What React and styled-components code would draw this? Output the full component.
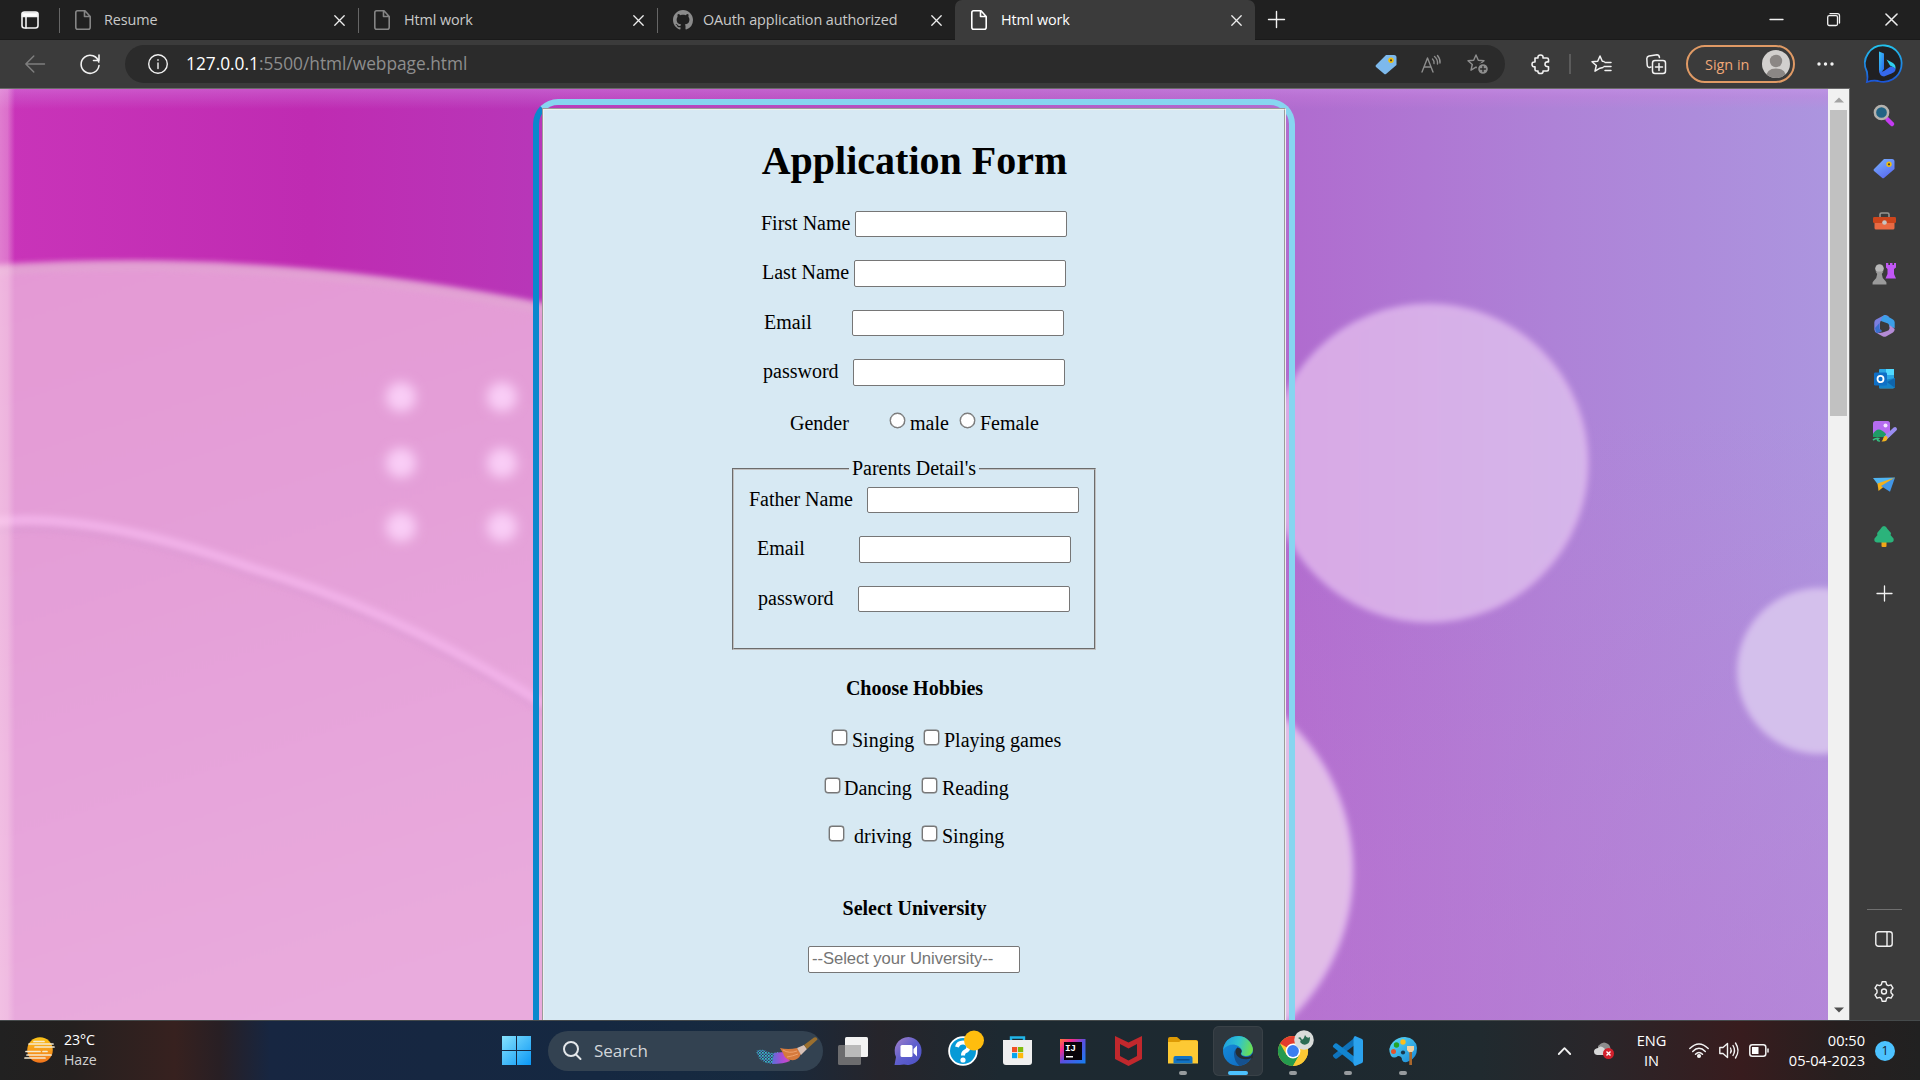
import React from "react";
import styled, { createGlobalStyle, css } from "styled-components";

const UI = `"Segoe UI", "Open Sans", "Noto Sans", sans-serif`;
const SERIF = `"Times New Roman", "Liberation Serif", serif`;

const Global = createGlobalStyle`
  *, *::before, *::after { box-sizing: border-box; }
  html, body { margin: 0; padding: 0; overflow: hidden; background: #202020; }
  svg { display: block; flex: none; overflow: visible; }
`;

const Desktop = styled.div`
  width: 1920px;
  height: 1080px;
  display: flex;
  flex-direction: column;
  font-family: ${UI};
  overflow: hidden;
`;

/* ---------- tab strip ---------- */

const TabStrip = styled.header`
  height: 40px;
  display: flex;
  align-items: stretch;
  background: #202020;
  border-bottom: 1px solid #1a1a1a;
  color: #c9c9c9;
`;

const WorkspaceButton = styled.div`
  width: 59px;
  display: flex;
  align-items: center;
  justify-content: center;
`;

const Tab = styled.div`
  width: ${(p) => p.$width}px;
  height: 40px;
  display: flex;
  align-items: center;
  padding: 0 13px 0 16px;
  font-size: 14.4px;
  letter-spacing: ${(p) => p.$track || 0}px;
  white-space: nowrap;
  ${(p) =>
    p.$active
      ? css`
          background: #3b3b3b;
          color: #fff;
          border-radius: 7px 7px 0 0;
        `
      : css`
          &::before {
            content: "";
            width: 1px;
            height: 25px;
            margin-left: -16px;
            margin-right: 15px;
            background: #666;
          }
        `}
`;

const TabTitle = styled.span`
  margin-left: ${(p) => p.$gap || 14}px;
  flex: 1;
  line-height: 20px;
  padding-bottom: 1px;
`;

const NewTab = styled.div`
  width: 43px;
  display: flex;
  align-items: center;
  justify-content: center;
`;

const WindowButtons = styled.div`
  margin-left: auto;
  display: flex;
  align-items: center;
`;

const WindowButton = styled.div`
  width: 57px;
  display: flex;
  justify-content: center;
  &:not(:last-child) {
    padding-right: 2px;
  }
`;

/* ---------- toolbar ---------- */

const Toolbar = styled.nav`
  height: 48px;
  display: flex;
  align-items: center;
  background: #3b3b3b;
`;

const ToolSlot = styled.div`
  width: ${(p) => p.$w}px;
  display: flex;
  align-items: center;
  justify-content: center;
`;

const AddressBar = styled.div`
  width: 1380px;
  height: 38px;
  display: flex;
  align-items: center;
  border-radius: 19px;
  background: #2b2b2b;
  padding-left: 11px;
`;

const Url = styled.span`
  margin-left: 6px;
  flex: 1;
  font-size: 17.3px;
  line-height: 24px;
  color: #8e8e8e;
  b {
    font-weight: 400;
    color: #fff;
  }
`;

const Divider = styled.i`
  width: 2px;
  height: 20px;
  margin: 0 0 0 -6px;
  background: #5b5b5b;
`;

const SignIn = styled.div`
  width: 109px;
  height: 38px;
  display: flex;
  align-items: center;
  justify-content: space-between;
  border: 2px solid #e09a65;
  border-radius: 19px;
  padding: 0 3px 0 17px;
  color: #f0a878;
  font-size: 14.4px;
`;

/* ---------- middle ---------- */

const Middle = styled.div`
  height: 932px;
  display: flex;
`;

const Viewport = styled.main`
  width: 1849px;
  height: 932px;
  display: flex;
  border-top: 1px solid #6a6a6a;
  overflow: hidden;
`;

const Page = styled.div`
  position: relative;
  width: 1828px;
  height: 931px;
  overflow: hidden;
`;

const Backdrop = styled.svg`
  position: absolute;
  inset: 0;
`;

const Scrollbar = styled.div`
  width: 21px;
  display: flex;
  flex-direction: column;
  align-items: center;
  background: #f1f1f1;
`;

const ScrollArrow = styled.div`
  height: 21px;
  display: flex;
  align-items: center;
`;

const ScrollThumb = styled.div`
  width: 17px;
  height: 306px;
  margin-bottom: auto;
  background: #c1c1c1;
`;

const SideBar = styled.aside`
  width: 71px;
  display: flex;
  flex-direction: column;
  align-items: center;
  background: #3b3b3b;
  border-left: 1px solid #6a6a6a;
  padding: 1px 2px 3px 0;
`;

const SideSlot = styled.div`
  height: ${(p) => p.$h || 52.7}px;
  display: flex;
  align-items: center;
`;

const SideRule = styled.i`
  width: 35px;
  height: 1px;
  margin-top: auto;
  margin-bottom: 3px;
  background: #707070;
`;

/* ---------- form ---------- */

const Frame = styled.section`
  position: relative;
  width: 762px;
  height: 1400px;
  margin: 10px 0 0 533px;
  padding: 3px;
  border: 6px solid #87d5f0;
  border-left-color: #0a88cd;
  border-radius: 25px;
`;

const Sheet = styled.form`
  height: 100%;
  border: 2px groove #efefef;
  background: #d7e9f3;
  font-family: ${SERIF};
  font-size: 20px;
  line-height: 23px;
  color: #000;
`;

const Title = styled.h1`
  margin: 28px 0 0;
  padding-left: 1px;
  text-align: center;
  font-size: 40px;
  line-height: 46px;
`;

const Row = styled.div`
  display: flex;
  align-items: flex-start;
  height: ${(p) => p.$h || 26}px;
  margin-top: ${(p) => p.$top}px;
  padding-left: ${(p) => p.$left}px;
  white-space: pre;
`;

const Label = styled.label`
  width: ${(p) => p.$w}px;
  padding-top: 1px;
`;

const TextInput = styled.input`
  width: 212px;
  height: 100%;
  margin: 0;
  padding: 0 3px 1px;
  border: 1px solid #767676;
  border-radius: 2px;
  background: #fff;
  font: 16.67px Arial, "Liberation Sans", sans-serif;
  letter-spacing: -0.08px;
  outline: none;
  &::placeholder {
    color: #757575;
    opacity: 1;
  }
`;

const Tick = styled.input`
  appearance: none;
  width: 15px;
  height: 15px;
  margin: 2px ${(p) => p.$gap || 5}px 0 0;
  border: 1px solid #767676;
  border-radius: ${(p) => (p.type === "radio" ? "50%" : "3px")};
  background: #fff;
  box-shadow: 0 0 0 0.4px #767676;
`;

const Fieldset = styled.fieldset`
  width: 364px;
  height: 193px;
  margin: 23px 0 0 188px;
  padding: 0;
  border: 2px groove rgb(192, 192, 192);
`;

const Legend = styled.legend`
  width: 130px;
  height: 23px;
  margin: 0 auto;
  padding: 0;
  text-align: center;
`;

const Heading = styled.h4`
  margin: ${(p) => p.$top}px 0 0;
  padding-left: 1px;
  font-size: 20px;
  line-height: 23px;
  text-align: center;
`;

/* ---------- taskbar ---------- */

const TaskBar = styled.footer`
  height: 60px;
  display: flex;
  align-items: center;
  border-top: 1px solid #454a4b;
  color: #fff;
  background: linear-gradient(
    90deg,
    #212121 0,
    #24201f 70px,
    #37211f 175px,
    #281f24 220px,
    #172641 270px,
    #152841 600px,
    #172a3f 760px,
    #26252b 880px,
    #1d2931 1000px,
    #1d2930 1300px,
    #202a2f 1480px,
    #29262a 1590px,
    #381c1e 1740px,
    #261f1f 1840px,
    #212121 1920px
  );
`;

const Weather = styled.div`
  width: 492px;
  padding: 0 0 2px 25px;
  display: flex;
  align-items: center;
  gap: 9px;
  font-size: 14.2px;
  line-height: 20px;
  letter-spacing: -0.1px;
  div div + div {
    color: #d0d0d0;
  }
`;

const StartSlot = styled.div`
  width: 56px;
  padding-left: 10px;
`;

const SearchBox = styled.div`
  width: 275px;
  height: 40px;
  display: flex;
  align-items: center;
  border-radius: 20px;
  background: #334251;
  padding: 0 5px 0 15px;
  font-size: 17px;
  color: #d2d6da;
  span {
    flex: 1;
    margin-left: 12px;
  }
`;

const AppSlot = styled.div`
  position: relative;
  width: 50px;
  height: 50px;
  margin: 0 2.5px;
  display: flex;
  align-items: center;
  justify-content: center;
  border-radius: 6px;
  ${(p) => p.$active && "background:#2e373e; box-shadow: inset 0 0 0 1px #394147;"}
`;

const Running = styled.i`
  position: absolute;
  bottom: 1px;
  left: 50%;
  width: ${(p) => (p.$active ? 20 : 8)}px;
  height: 4px;
  border-radius: 2px;
  transform: translateX(-50%);
  background: ${(p) => (p.$active ? "#4cc2ff" : "#979b9e")};
`;

const Tray = styled.div`
  margin-left: auto;
  display: flex;
  align-items: center;
  padding-right: 25px;
  font-size: 14.6px;
  line-height: 20px;
`;

const TraySlot = styled.div`
  width: ${(p) => p.$w}px;
  display: flex;
  justify-content: center;
  text-align: center;
`;

const Language = styled.div`
  width: 55px;
  margin-right: 1px;
  padding-bottom: 2px;
  text-align: center;
`;

const Clock = styled.div`
  width: 87px;
  text-align: right;
  margin-right: 10px;
  padding-bottom: 2px;
  white-space: nowrap;
`;

const Notice = styled.div`
  width: 20px;
  height: 20px;
  border-radius: 50%;
  background: #4cc2ff;
  color: #15212b;
  font-size: 12.5px;
  line-height: 19px;
  text-align: center;
`;

/* ---------- icons ---------- */

const Line = ({ w = 20, h = w, color = "#f2f2f2", sw = 1.4, vb, children, ...rest }) => (
  <svg width={w} height={h} viewBox={vb || `0 0 ${w} ${h}`} fill="none" stroke={color} strokeWidth={sw} strokeLinecap="round" strokeLinejoin="round" {...rest}>
    {children}
  </svg>
);

const DocIcon = ({ color }) => (
  <Line w={16} h={20} color={color} sw={1.6}>
    <path d="M10 .8H2.6Q.8.8.8 2.8V17.2Q.8 19.2 2.6 19.2H13.4Q15.2 19.2 15.2 17.2V6.5ZM9.5 1V6.5H15" />
  </Line>
);

const CloseIcon = ({ s = 11, color = "#ededed" }) => (
  <Line w={s} color={color} vb="0 0 11 11" sw={1.3}>
    <path d="M.8.8 10.2 10.2M10.2.8.8 10.2" />
  </Line>
);

const GithubIcon = () => (
  <svg width="20" height="20" viewBox="0 0 16 16" fill="#8b8b8b">
    <path d="M8 0C3.58 0 0 3.58 0 8c0 3.54 2.29 6.53 5.47 7.59.4.07.55-.17.55-.38 0-.19-.01-.82-.01-1.49-2.01.37-2.53-.49-2.69-.94-.09-.23-.48-.94-.82-1.13-.28-.15-.68-.52-.01-.53.63-.01 1.08.58 1.23.82.72 1.21 1.87.87 2.33.66.07-.52.28-.87.51-1.07-1.78-.2-3.64-.89-3.64-3.95 0-.87.31-1.59.82-2.15-.08-.2-.36-1.02.08-2.12 0 0 .67-.21 2.2.82.64-.18 1.32-.27 2-.27s1.36.09 2 .27c1.53-1.04 2.2-.82 2.2-.82.44 1.1.16 1.92.08 2.12.51.56.82 1.27.82 2.15 0 3.07-1.87 3.75-3.65 3.95.29.25.54.73.54 1.48 0 1.07-.01 1.93-.01 2.2 0 .21.15.46.55.38A8.01 8.01 0 0 0 16 8c0-4.42-3.58-8-8-8Z" />
  </svg>
);

const BingIcon = () => (
  <svg width="40" height="40" viewBox="0 0 40 40">
    <defs>
      <linearGradient id="bgA" x1="0" y1="0" x2="0" y2="1">
        <stop offset="0" stopColor="#22c3ee" />
        <stop offset="1" stopColor="#1b55d8" />
      </linearGradient>
      <linearGradient id="bgB" x1="0" y1="0" x2="1" y2="1">
        <stop offset="0" stopColor="#37c9f2" />
        <stop offset="1" stopColor="#2a62f0" />
      </linearGradient>
    </defs>
    <path d="M20 1.5A18.2 18.2 0 1 1 13 37Q8 36 2 38Q3 34 2 28A18.2 18.2 0 0 1 20 1.5Z" fill="#202023" stroke="url(#bgA)" strokeWidth="1.8" />
    <path d="M14 7.500 19 9.500V25L15.500 29.500Q14 28 14 26Z" fill="url(#bgB)" />
    <path d="M21.500 15.500 28 19Q31 21 30.500 25Q27 22 25 21.500Z" fill="#2fd0ee" />
    <path d="M14 26Q15 29 19 27L25.500 22.500Q31 23 30.500 26Q30 28 26.500 29.500L19 32.500Q14.500 32.500 14 26Z" fill="#3568ee" />
  </svg>
);

const SearchTool = () => (
  <svg width="22" height="22" viewBox="0 0 22 22">
    <path d="M14.500 15.500 19 20" stroke="#c43bf2" strokeWidth="4.500" strokeLinecap="round" />
    <circle cx="8.500" cy="8.500" r="6.600" fill="#216384" stroke="#b4b2ae" strokeWidth="2.500" />
  </svg>
);

const TagIcon = ({ toolbar }) => (
  <svg width="22" height="21" viewBox="0 0 22 21">
    <defs>
      <linearGradient id="tagG" x1="0" y1="0" x2=".6" y2="1">
        <stop offset="0" stopColor="#79b4ff" />
        <stop offset="1" stopColor="#5b6df0" />
      </linearGradient>
    </defs>
    <path d="M11 1H19Q21.500 1 21.500 3.500V11L11 20Q10 20.800 9 19.800L1 13Q0 12 1 11Z" fill={toolbar ? "#7db9ec" : "url(#tagG)"} />
    <circle cx="16" cy="6.300" r="2.700" fill="#efbd0e" />
    <circle cx="16" cy="6.300" r="1.100" fill="#473b20" />
  </svg>
);

const ToolboxIcon = () => (
  <svg width="23" height="18" viewBox="0 0 23 18">
    <path d="M7 5V2.500Q7 1 8.500 1H14.500Q16 1 16 2.500V5" fill="none" stroke="#979591" strokeWidth="1.600" />
    <path d="M1.500 9H21.500V16Q21.500 17.500 20 17.500H3Q1.500 17.500 1.500 16Z" fill="#e96a43" />
    <rect x="0" y="5" width="23" height="6" rx="1.200" fill="#cc451c" />
    <circle cx="11.500" cy="10.500" r="2.300" fill="#c7c5c3" />
  </svg>
);

const ChessIcon = () => (
  <svg width="24" height="23" viewBox="0 0 24 23">
    <path d="M14 1H16.300V3H18V1H20.500V3H22V1H24V5.500L22 7V12L24 16.500H13.500L15.500 12V7L14 5.500Z" fill="#c257f6" />
    <circle cx="7.500" cy="6.500" r="4.300" fill="#b8b8b8" />
    <path d="M3.500 9.500H11.500L9.800 12Q10 16 13 18.500Q15 20 14.500 22.500H.5Q0 20 2 18.500Q5 16 5.200 12Z" fill="#9a9a9a" />
  </svg>
);

const M365Icon = () => (
  <svg width="21" height="22" viewBox="0 0 21 22">
    <path d="M10.500 0 2 4.500Q.3 5.500.3 7.500V14.500Q.5 17.500 3 18.300L8 16Q5.500 15 6 12V8Q6 6 8 5L15 1.500Q12.500-.5 10.500 0Z" fill="#7c7fe0" />
    <path d="M10.500 0Q7 2 7 6L14 8.500Q15.500 9.500 15.500 12L20.700 13V7.500Q20.700 5.500 19 4.500L13 1Q11.500 0 10.500 0Z" fill="#3c9fe8" />
    <path d="M15.500 10V13.500Q15 15.500 13 16L8.500 17.500 3 18.300 9 21.500Q10.500 22 12 21.500L19 17.500Q20.700 16.300 20.700 14Z" fill="#b48bd6" />
    <path d="M2 17.500Q5 18.500 8 16L5.500 14V8L1 13Z" fill="#3a6fce" />
  </svg>
);

const OutlookIcon = () => (
  <svg width="21" height="20" viewBox="0 0 21 20">
    <rect x="5" y="0" width="15" height="19.500" rx="1" fill="#2aa6e4" />
    <path d="M12 0H20V6H12Z" fill="#50d9ff" />
    <path d="M5 12 21 9V19H5Z" fill="#1583c9" />
    <path d="M21 9V19L13 13Z" fill="#0f65ac" />
    <rect x="0" y="3.500" width="13" height="13" rx="1.200" fill="#0f6fc6" />
    <ellipse cx="6.500" cy="10" rx="3" ry="3.200" fill="none" stroke="#fff" strokeWidth="1.800" />
  </svg>
);

const DesignerIcon = () => (
  <svg width="24" height="23" viewBox="0 0 24 23">
    <rect x="1" y="1" width="17" height="16" rx="2.500" fill="#b66cf0" />
    <path d="M1 14Q6 5 14 14V17H1Z" fill="#1f9b66" />
    <circle cx="13.500" cy="5.500" r="2" fill="#f4e6ff" />
    <path d="M23 9 14 17.500" stroke="#9a8df2" strokeWidth="4" strokeLinecap="round" />
    <path d="M15.500 17Q16 22 9.500 21.500Q11 20 11.500 17.500Q13.500 15 15.500 17Z" fill="#f5b51f" />
    <path d="M1 20Q4 18 6.500 18.500Q4 21 8 21" fill="none" stroke="#35c081" strokeWidth="1.700" />
  </svg>
);

const DropIcon = () => (
  <svg width="22" height="15" viewBox="0 0 22 15">
    <path d="M0 1 22 .5 6 9Z" fill="#50b5f2" />
    <path d="M22 .5 4.500 6.500 5.500 14Z" fill="#f3b11c" />
    <path d="M22 .5 8 9 17 14.800Z" fill="#4297e8" />
  </svg>
);

const TreeIcon = () => (
  <svg width="22" height="21" viewBox="0 0 22 21">
    <rect x="8.500" y="14" width="5" height="7" rx="1" fill="#f0a618" />
    <path d="M11 0Q13 0 14.500 3L18 7Q18 8.500 17.500 9L20.500 12.500Q21.500 16 18 16.500H4Q.5 16 1.500 12.500L4.500 9Q3.500 8 4.500 6.500L7.500 3Q9 0 11 0Z" fill="#2bb37b" />
  </svg>
);

const GearIcon = () => (
  <Line w={20} h={21} vb="0 0 20 21" sw={1.400}>
    <path d="M8.100.8H11.900L12.600 3.600 14.300 4.600 17 3.800 19 7.100 17 9.200V11.800L19 13.900 17 17.200 14.300 16.400 12.600 17.400 11.900 20.200H8.100L7.400 17.400 5.700 16.400 3 17.200 1 13.900 3 11.800V9.200L1 7.100 3 3.800 5.700 4.600 7.400 3.600Z" />
    <circle cx="10" cy="10.500" r="2.500" />
  </Line>
);

const StarPath = "M9 1 11.300 6.300 17 6.800 12.700 10.500 14 16.200 9 13.200 4 16.200 5.300 10.500 1 6.800 6.700 6.300Z";

/* taskbar artwork */

const HazeIcon = () => (
  <svg width="30" height="26" viewBox="0 0 30 26">
    <defs>
      <linearGradient id="sun" x1="0" y1="0" x2="0" y2="1">
        <stop offset="0" stopColor="#fbc418" />
        <stop offset="1" stopColor="#f1741c" />
      </linearGradient>
    </defs>
    <circle cx="15" cy="13" r="12.800" fill="url(#sun)" />
    <g stroke="#f5ead0" strokeWidth="1.700" strokeLinecap="round">
      <path d="M9 4.500H19M4 7H28M10 10H29M1 14.500H15M18 14.500H22M2 18H26M0 21H20" />
    </g>
  </svg>
);

const StartIcon = () => (
  <svg width="29" height="29" viewBox="0 0 29 29">
    <defs>
      <linearGradient id="win" x1="0" y1="0" x2="1" y2="1">
        <stop offset="0" stopColor="#86e2fd" />
        <stop offset="1" stopColor="#0a97f5" />
      </linearGradient>
    </defs>
    <path d="M0 0H14V14H0ZM15 0H29V14H15ZM0 15H14V29H0ZM15 15H29V29H15Z" fill="url(#win)" />
  </svg>
);

const BrushArt = () => (
  <svg width="62" height="28" viewBox="0 0 62 28">
    <defs>
      <linearGradient id="paintG" x1="0" x2="1">
        <stop offset="0" stopColor="#5a6fd8" />
        <stop offset=".5" stopColor="#a04fd6" />
        <stop offset=".8" stopColor="#c247d2" />
        <stop offset="1" stopColor="#c45a90" />
      </linearGradient>
      <pattern id="dither" width="3" height="3" patternUnits="userSpaceOnUse">
        <rect width="1.700" height="1.700" fill="#39b9cf" />
        <rect x="1.500" y="1.500" width="1.500" height="1.500" fill="#3f8ed0" />
      </pattern>
    </defs>
    <path d="M0 14Q7 11 12 15Q16 17 22 15V26Q10 29 3 21Z" fill="url(#dither)" />
    <path d="M18 16Q26 15 30 15L34 24Q28 27 16 27Z" fill="url(#paintG)" />
    <path d="M24 11Q32 13 41 11L45 17Q42 24 35 23Q29 23 27 16Z" fill="#d57a3d" />
    <path d="M27 13Q33 17 41 14M31 20Q37 19 42 17" stroke="#eda16c" fill="none" />
    <path d="M41 11 48 8 51 12 45 18Z" fill="#d8c2b8" />
    <path d="M48 8 58 .5Q61-.5 61.500 2.500L51 12Z" fill="#9a6f2f" />
  </svg>
);

const TaskViewIcon = () => (
  <svg width="30" height="28" viewBox="0 0 30 28">
    <rect x="7" y="0" width="23" height="20" rx="1.500" fill="#f3f3f3" />
    <rect x="0" y="8" width="23" height="20" rx="1.500" fill="#6c6c6e" />
    <rect x="7" y="8" width="16" height="12" fill="#bababa" />
  </svg>
);

const ChatIcon = () => (
  <svg width="29" height="28" viewBox="0 0 29 28">
    <defs>
      <linearGradient id="chatG" x1="0" y1="0" x2="1" y2="1">
        <stop offset="0" stopColor="#a582c8" />
        <stop offset=".5" stopColor="#5f5fce" />
        <stop offset="1" stopColor="#4a50c4" />
      </linearGradient>
    </defs>
    <path d="M14.500 0A14 14 0 1 1 10 27.500Q6 28 .5 28L2 20A14 14 0 0 1 14.500 0Z" fill="url(#chatG)" />
    <rect x="6.500" y="8" width="12" height="12" rx="1.500" fill="#fff" />
    <path d="M19.500 12 23 8.500V19.500L19.500 16Z" fill="#fff" />
  </svg>
);

const HelpIcon = () => (
  <svg width="30" height="30" viewBox="0 0 30 30">
    <circle cx="15" cy="15" r="13.900" fill="#079ad7" stroke="#fff" strokeWidth="1.800" />
    <path d="M9 11Q10 6.500 15 6.500T20.500 11Q20.500 14 17 15.500Q15 16.500 15 19.500" fill="none" stroke="#fff" strokeWidth="4" />
    <circle cx="15" cy="24" r="2.600" fill="#fff" />
    <circle cx="26" cy="4.500" r="10" fill="#ffbd0e" />
  </svg>
);

const StoreIcon = () => (
  <svg width="30" height="29" viewBox="0 0 30 29">
    <path d="M8 5V1.500H21V5" fill="none" stroke="#20b5e8" strokeWidth="2.400" />
    <path d="M0 4H29V26Q29 29 26 29H3Q0 29 0 26Z" fill="#efefef" />
    <rect x="9" y="11" width="5.200" height="5.200" fill="#f15025" />
    <rect x="15" y="11" width="5.200" height="5.200" fill="#80bb0b" />
    <rect x="9" y="17" width="5.200" height="5.200" fill="#06a5ee" />
    <rect x="15" y="17" width="5.200" height="5.200" fill="#feb90a" />
  </svg>
);

const IntelliJIcon = () => (
  <svg width="26" height="26" viewBox="0 0 26 26">
    <defs>
      <linearGradient id="ijG" x1="0" y1="0" x2="1" y2="1">
        <stop offset="0" stopColor="#fd7a36" />
        <stop offset=".25" stopColor="#f72a8c" />
        <stop offset=".5" stopColor="#5a4fe0" />
        <stop offset="1" stopColor="#1480f2" />
      </linearGradient>
    </defs>
    <path d="M0 1H25.500V25.500H0Z" fill="url(#ijG)" />
    <rect x="4" y="4" width="18" height="18" fill="#080309" />
    <text x="5" y="13" fill="#fff" fontFamily="Liberation Mono, monospace" fontWeight="700" fontSize="9.500" textLength="11">IJ</text>
    <rect x="6" y="18" width="7" height="1.500" fill="#fff" />
  </svg>
);

const McAfeeIcon = () => (
  <svg width="27" height="30" viewBox="0 0 27 30">
    <path d="M0 0 13.500 6.500 27 0V23L13.500 30 0 23ZM5 8V20L13.500 24.500 22 20V8L13.500 12.500Z" fill="#c1282d" fillRule="evenodd" />
  </svg>
);

const FolderIcon = () => (
  <svg width="30" height="27" viewBox="0 0 30 27">
    <path d="M0 2Q0 0 2 0H9L12.500 3H28Q30 3 30 5V10H0Z" fill="#dd9a05" />
    <path d="M0 5H11L13.500 3.500H28Q30 3.500 30 5.500V26.500H0Z" fill="#fdc934" />
    <path d="M5.500 26.500V21Q5.500 19 7.500 19H22.500Q24.500 19 24.500 21V26.500Z" fill="#1173c4" />
    <path d="M8.500 22.800H21.500" stroke="#0b4a86" strokeWidth="1.400" />
  </svg>
);

const EdgeIcon = () => (
  <svg width="30" height="30" viewBox="0 0 30 30">
    <defs>
      <linearGradient id="edT" x1="0" y1=".3" x2="1" y2=".5">
        <stop offset="0" stopColor="#1f9fe0" />
        <stop offset=".5" stopColor="#2fc3d0" />
        <stop offset="1" stopColor="#6de04e" />
      </linearGradient>
      <linearGradient id="edB" x1="0" y1="0" x2="1" y2="1">
        <stop offset="0" stopColor="#1590de" />
        <stop offset="1" stopColor="#0f65bd" />
      </linearGradient>
    </defs>
    <circle cx="15" cy="15" r="15" fill="url(#edB)" />
    <path d="M.1 14Q1 5 8.500 1.500Q20-3 27 6Q31 12 29.500 16Q27.500 20.500 22 20Q18.500 19.500 18 18Q19.500 16.500 18.500 13.500Q16.500 9.500 11 8.500Q3.500 8.500.1 14Z" fill="url(#edT)" />
    <path d="M11 18Q11 14 14.500 11.500Q18.500 12 18.800 15Q18 16 18 18Q18.500 21.500 24 22Q26.500 22 28 21.500Q24 29 16.500 30Q11 25 11 18Z" fill="#15518f" />
    <path d="M14.500 11.500Q18.500 12.500 18.500 15.500Q17 17.500 18.500 19.500Q22 22 27.500 20L30 17V22Q24 24 18 22.500Q13 20 12.500 16Q12.500 13 14.500 11.500Z" fill="#252d34" />
  </svg>
);

const ChromeIcon = () => (
  <svg width="30" height="30" viewBox="0 0 30 30">
    <circle cx="15" cy="15" r="15" fill="#fcc934" />
    <path d="M15 15 2 7.500A15 15 0 0 1 28 7.500Z" fill="#e33b2e" />
    <path d="M2 7.500A15 15 0 0 0 15 30L21.500 18.700 8.500 18.700Z" fill="#259b4e" />
    <path d="M15 7.500H28A15 15 0 0 1 15 30L21.500 18.700Z" fill="#fcc934" />
    <circle cx="15" cy="15" r="7.400" fill="#fff" />
    <circle cx="15" cy="15" r="5.900" fill="#397ef0" />
    <circle cx="26" cy="4" r="9.800" fill="#d9dcda" />
    <path d="M20 2Q23 0 23.500 3Q25 5 27-1Q29 3 32 1Q32 7 29 8Q25 10 22 6Q24 4 20 2Z" fill="#2b6c53" />
  </svg>
);

const CodeIcon = () => (
  <svg width="30" height="30" viewBox="0 0 30 30">
    <path d="M22 0 20 3 0 19Q-.5 20 .5 21L2 22.500Q3 23 4 22.500L23 8Z" fill="#0f73bb" />
    <path d="M22 30 20 27 0 11Q-.5 10 .5 9L2 7.500Q3 7 4 7.500L23 22Z" fill="#1285d0" />
    <path d="M22 0 29 3Q30 3.500 30 5V25Q30 26.500 29 27L22 30Q20.500 29 20.500 27V3Q20.500 1 22 0Z" fill="#2ba2ee" />
  </svg>
);

const PaintIcon = () => (
  <svg width="28" height="29" viewBox="0 0 28 29">
    <defs>
      <linearGradient id="palG" x1="0" y1="0" x2="1" y2="1">
        <stop offset="0" stopColor="#5cdcf8" />
        <stop offset="1" stopColor="#1787d6" />
      </linearGradient>
    </defs>
    <path d="M16 1Q27 2 28 12Q28 22 20 25Q15 28 13 24Q13 20 9 20Q5 23 2 20Q-2 12 4 6Q9 1 16 1Z" fill="url(#palG)" />
    <circle cx="14" cy="6" r="2.700" fill="#fcbf1a" />
    <circle cx="7.500" cy="9" r="2.700" fill="#23a427" />
    <circle cx="4.500" cy="15.500" r="2.500" fill="#e2532c" />
    <circle cx="14" cy="16.500" r="2.100" fill="#17384e" />
    <path d="M18 10H25V14L22.500 17H20.500L18 14Z" fill="#f1d3a4" />
    <path d="M20.300 16H23V29H20.300Z" fill="#a9672c" />
  </svg>
);

/* ---------- page background ---------- */

const Background = () => (
  <Backdrop width="1828" height="931" viewBox="0 0 1828 931">
    <defs>
      <linearGradient id="base" x1="0" x2="1828" y1="0" y2="0" gradientUnits="userSpaceOnUse">
        <stop offset="0" stopColor="#c934b9" />
        <stop offset=".17" stopColor="#bf2bb2" />
        <stop offset=".29" stopColor="#b836b8" />
        <stop offset=".5" stopColor="#b550bf" />
        <stop offset=".71" stopColor="#b06ccf" />
        <stop offset=".85" stopColor="#ae82d7" />
        <stop offset="1" stopColor="#ac95df" />
      </linearGradient>
      <linearGradient id="warm" x1="0" y1="0" x2="0" y2="1">
        <stop offset=".35" stopColor="#c47bd0" stopOpacity="0" />
        <stop offset="1" stopColor="#bd78d2" stopOpacity=".5" />
      </linearGradient>
      <linearGradient id="topGlow" x1="0" y1="0" x2="0" y2="1">
        <stop offset="0" stopColor="#d994ed" stopOpacity=".38" />
        <stop offset=".4" stopColor="#d080df" stopOpacity=".28" />
        <stop offset="1" stopColor="#d080df" stopOpacity="0" />
      </linearGradient>
      <linearGradient id="pink" x1="0" y1="0" x2=".3" y2="1">
        <stop offset="0" stopColor="#e499d4" />
        <stop offset=".4" stopColor="#e49fd8" />
        <stop offset="1" stopColor="#e9abdd" />
      </linearGradient>
      <linearGradient id="edge" x1="0" x2="1">
        <stop offset="0" stopColor="#ffe0ed" stopOpacity=".42" />
        <stop offset=".5" stopColor="#ffe0ed" stopOpacity=".35" />
        <stop offset="1" stopColor="#ffe0ed" stopOpacity="0" />
      </linearGradient>
      <linearGradient id="bubble" x1="0" x2="1">
        <stop offset="0" stopColor="#d9a8e5" />
        <stop offset="1" stopColor="#d5b6ea" />
      </linearGradient>
      <filter id="soft" x="-20%" y="-20%" width="140%" height="140%">
        <feGaussianBlur stdDeviation="3" />
      </filter>
      <filter id="softer" x="-60%" y="-60%" width="220%" height="220%">
        <feGaussianBlur stdDeviation="6" />
      </filter>
    </defs>
    <rect width="1828" height="931" fill="url(#base)" />
    <rect x="1000" width="828" height="931" fill="url(#warm)" />
    <rect width="1828" height="20" fill="url(#topGlow)" />
    <path d="M-20 178Q70 172 160 173Q350 176 545 215L700 260V960H-20Z" fill="url(#pink)" filter="url(#soft)" />
    <path d="M-10 182Q70 176 160 177Q350 180 545 221" fill="none" stroke="#e2a8d3" strokeWidth="8" opacity=".7" filter="url(#soft)" />
    <path d="M-10 442Q90 428 252 486Q400 530 545 623" fill="none" stroke="#d795d0" strokeWidth="5" opacity=".6" filter="url(#soft)" />
    <path d="M-10 433Q90 421 252 479Q400 523 545 616" fill="none" stroke="#f2b2e9" strokeWidth="9" filter="url(#soft)" />
    <g fill="#f9cdf6" filter="url(#softer)">
      {[308, 374, 438].map((y) => (
        <React.Fragment key={y}>
          <circle cx="401" cy={y} r="15" />
          <circle cx="502" cy={y} r="15" />
        </React.Fragment>
      ))}
    </g>
    <rect width="15" height="931" fill="url(#edge)" />
    <g filter="url(#soft)">
      <circle cx="1429" cy="374" r="158" fill="url(#bubble)" stroke="#dcb0ee" strokeWidth="3" />
      <circle cx="1820" cy="582" r="82" fill="#d4c0ec" stroke="#d8bdf1" strokeWidth="2" />
      <circle cx="1147" cy="782" r="205" fill="#e1bde7" stroke="#dfb2ef" strokeWidth="3" />
    </g>
  </Backdrop>
);

/* ---------- data ---------- */

const applicant = [
  { label: "First Name", top: 27, left: 217, w: 94, h: 26 },
  { label: "Last Name", top: 23, left: 218, w: 92, h: 27 },
  { label: "Email", top: 23, left: 220, w: 88, h: 26 },
  { label: "password", top: 23, left: 219, w: 90, h: 27, type: "password" },
];

const parents = [
  { label: "Father Name", top: 7, left: 15, w: 118, h: 26 },
  { label: "Email", top: 23, left: 23, w: 102, h: 27 },
  { label: "password", top: 23, left: 24, w: 100, h: 26, type: "password" },
];

const hobbies = [
  { top: 28, left: 288, gap: 5, first: "Singing", w: 72, second: "Playing games" },
  { top: 25, left: 281, gap: 4, first: "Dancing", w: 78, second: "Reading" },
  { top: 25, left: 285, gap: 10, first: "driving", w: 68, second: "Singing" },
];

const Field = ({ label, top, left, w, h, type = "text" }) => (
  <Row $top={top} $left={left} $h={h}>
    <Label $w={w}>{label}</Label>
    <TextInput type={type} />
  </Row>
);

const apps = [
  { icon: TaskViewIcon },
  { icon: ChatIcon },
  { icon: HelpIcon },
  { icon: StoreIcon },
  { icon: IntelliJIcon },
  { icon: McAfeeIcon },
  { icon: FolderIcon, running: true },
  { icon: EdgeIcon, running: true, active: true },
  { icon: ChromeIcon, running: true },
  { icon: CodeIcon, running: true },
  { icon: PaintIcon, running: true },
];

const sideApps = [SearchTool, TagIcon, ToolboxIcon, ChessIcon, M365Icon, OutlookIcon, DesignerIcon, DropIcon, TreeIcon];

export default function App() {
  return (
    <Desktop>
      <Global />
      <TabStrip>
        <WorkspaceButton>
          <Line w={18} sw={1.600}>
            <rect x="1" y="1" width="16" height="16" rx="2.500" />
            <path d="M1.500 2H16.500V5.500H1.500Z" fill="#fff" />
            <path d="M5 6V17" />
          </Line>
        </WorkspaceButton>
        <Tab $width={299} $track={-0.1}>
          <DocIcon color="#858585" />
          <TabTitle $gap={13}>Resume</TabTitle>
          <CloseIcon />
        </Tab>
        <Tab $width={299} $track={-0.1}>
          <DocIcon color="#858585" />
          <TabTitle>Html work</TabTitle>
          <CloseIcon />
        </Tab>
        <Tab $width={298} $track={-0.1}>
          <GithubIcon />
          <TabTitle $gap={10}>OAuth application authorized</TabTitle>
          <CloseIcon />
        </Tab>
        <Tab $width={300} $active $track={-0.1}>
          <DocIcon color="#fff" />
          <TabTitle>Html work</TabTitle>
          <CloseIcon />
        </Tab>
        <NewTab>
          <Line w={17} sw={1.400}><path d="M8.500.5V16.500M.5 8.500H16.500" /></Line>
        </NewTab>
        <WindowButtons>
          <WindowButton><Line w={13} sw={1.300}><path d="M0 6.500H13" /></Line></WindowButton>
          <WindowButton>
            <Line w={13} sw={1.300}><rect x=".7" y="2.700" width="9.800" height="9.800" rx="1.500" /><path d="M3 .7H10.500Q12.500.7 12.500 2.700V10" /></Line>
          </WindowButton>
          <WindowButton><CloseIcon s={13} /></WindowButton>
        </WindowButtons>
      </TabStrip>

      <Toolbar>
        <ToolSlot $w={70}>
          <Line w={20} h={18} color="#7f7f7f" sw={1.400}><path d="M19.500 9H.8M8.800 1 .8 9 8.800 17" /></Line>
        </ToolSlot>
        <ToolSlot $w={40}>
          <Line w={20} sw={1.600}><path d="M18.800 8A9 9 0 1 0 19 11.500M19 1V6.500H13.500" /></Line>
        </ToolSlot>
        <ToolSlot $w={15} />
        <AddressBar>
          <ToolSlot $w={44}>
            <Line w={20} sw={1.400}><circle cx="10" cy="10" r="9.300" /><path d="M10 9V14.500M10 5.800V6.200" /></Line>
          </ToolSlot>
          <Url><b>127.0.0.1</b>:5500/html/webpage.html</Url>
          <ToolSlot $w={45}><TagIcon toolbar /></ToolSlot>
          <ToolSlot $w={46}>
            <Line w={20} h={18} color="#8e8e8e"><path d="M1 17 6.500 3 12 17M3 12H10M11.500 4Q13.500 6 13 8.500M13.500 1.500Q17 4.500 16.500 9M16.500.5Q19.500 4 19 8" /></Line>
          </ToolSlot>
          <ToolSlot $w={46}>
            <Line w={21} h={20} color="#8e8e8e"><path d={StarPath} /><circle cx="16" cy="15" r="5.500" fill="#8e8e8e" stroke="#2b2b2b" /><path d="M13.500 15H18.500M16 12.500V17.500" stroke="#2b2b2b" /></Line>
          </ToolSlot>
          <ToolSlot $w={5} />
        </AddressBar>
        <ToolSlot $w={70}>
          <Line w={19} h={20} sw={1.600}>
            <path d="M4 4H7Q6.500 1 9.500 1T12 4H16Q17.500 4 17.500 5.500V8Q14 7.500 14 10.200T17.500 12.800V15.500Q17.500 17 16 17H12Q12.500 19.500 9.500 19.500T7 17H5.500Q4 17 4 15.500V12.800Q1 13 1 10.300T4 8Z" />
          </Line>
        </ToolSlot>
        <Divider />
        <ToolSlot $w={60}>
          <Line w={21} h={19} sw={1.500}><path d="M12 12.500 9 13.200 4 16.200 5.300 10.500 1 6.800 6.700 6.300 9 1 11.300 6.300 13 6.500M14 7.500H20M13 11.500H20M14 15.500H20" /></Line>
        </ToolSlot>
        <ToolSlot $w={49}>
          <Line w={20} h={20} sw={1.500}><path d="M5 13 3.500 13.500Q1.500 13.500 1.200 11L.8 4.500Q1 2.500 3 2L11 .8Q13 .8 13.500 3.500" /><rect x="6.500" y="6.500" width="13" height="13" rx="2.500" /><path d="M13 9.500V16.500M9.500 13H16.500" /></Line>
        </ToolSlot>
        <ToolSlot $w={6} />
        <SignIn>
          Sign in
          <svg width="28" height="28" viewBox="0 0 28 28">
            <defs><clipPath id="av"><circle cx="14" cy="14" r="14" /></clipPath></defs>
            <circle cx="14" cy="14" r="14" fill="#d2d0ce" />
            <g clipPath="url(#av)" fill="#8b8785"><circle cx="14" cy="11" r="6.200" /><path d="M4 28Q4 18.500 14 18.500T24 28Z" /></g>
          </svg>
        </SignIn>
        <ToolSlot $w={60}>
          <svg width="17" height="4" viewBox="0 0 17 4" fill="#f2f2f2"><circle cx="2" cy="2" r="1.700" /><circle cx="8.500" cy="2" r="1.700" /><circle cx="15" cy="2" r="1.700" /></svg>
        </ToolSlot>
        <ToolSlot $w={60}><BingIcon /></ToolSlot>
      </Toolbar>

      <Middle>
        <Viewport>
          <Page>
            <Background />
            <Frame>
              <Sheet>
                <Title>Application Form</Title>
                {applicant.map((f) => <Field key={f.label} {...f} />)}
                <Row $top={25} $left={246} $h={23}>
                  <Label $w={100}>Gender</Label>
                  <Tick type="radio" />
                  <Label $w={50}>male</Label>
                  <Tick type="radio" />
                  <Label>Female</Label>
                </Row>
                <Fieldset>
                  <Legend>Parents Detail's</Legend>
                  {parents.map((f) => <Field key={f.label} {...f} />)}
                </Fieldset>
                <Heading $top={27}>Choose Hobbies</Heading>
                {hobbies.map((h) => (
                  <Row key={h.second} $top={h.top} $left={h.left} $h={23}>
                    <Tick type="checkbox" $gap={h.gap} />
                    <Label $w={h.w}>{h.first}</Label>
                    <Tick type="checkbox" />
                    <Label>{h.second}</Label>
                  </Row>
                ))}
                <Heading $top={50}>Select University</Heading>
                <Row $top={26} $left={264} $h={27}>
                  <TextInput placeholder="--Select your University--" />
                </Row>
              </Sheet>
            </Frame>
          </Page>
          <Scrollbar>
            <ScrollArrow><svg width="10" height="6" viewBox="0 0 10 6"><path d="M0 5.500 5 .5 10 5.500Z" fill="#a3a3a3" /></svg></ScrollArrow>
            <ScrollThumb />
            <ScrollArrow><svg width="10" height="6" viewBox="0 0 10 6"><path d="M0 .5 5 5.500 10 .5Z" fill="#505050" /></svg></ScrollArrow>
          </Scrollbar>
        </Viewport>
        <SideBar>
          {sideApps.map((Icon, i) => <SideSlot key={i}><Icon /></SideSlot>)}
          <SideSlot $h={60}><Line w={15} sw={1.300}><path d="M7.500 0V15M0 7.500H15" /></Line></SideSlot>
          <SideRule />
          <SideSlot $h={52}><Line w={18} h={16} sw={1.400}><rect x=".8" y=".8" width="16.400" height="14.400" rx="2.500" /><path d="M12 1V15" /></Line></SideSlot>
          <SideSlot $h={52}><GearIcon /></SideSlot>
        </SideBar>
      </Middle>

      <TaskBar>
        <Weather>
          <HazeIcon />
          <div>
            <div>23°C</div>
            <div>Haze</div>
          </div>
        </Weather>
        <StartSlot><StartIcon /></StartSlot>
        <SearchBox>
          <Line w={19} color="#e4e7ea" sw={2}><circle cx="8" cy="8" r="7" /><path d="M13 13.500 17.500 18" /></Line>
          <span>Search</span>
          <BrushArt />
        </SearchBox>
        <ToolSlot $w={2.5} />
        {apps.map(({ icon: Icon, running, active }, i) => (
          <AppSlot key={i} $active={active}>
            <Icon />
            {running && <Running $active={active} />}
          </AppSlot>
        ))}
        <Tray>
          <TraySlot $w={40}><Line w={13} h={8} sw={1.800}><path d="M.8 7 6.500 1.200 12.200 7" /></Line></TraySlot>
          <TraySlot $w={40}>
            <svg width="20" height="17" viewBox="0 0 20 17">
              <path d="M4 4Q9-2 14 2Q16 3 16.500 7H4Z" fill="#8d8d8d" />
              <path d="M3 13Q0 12.500 0 9.500T4 6Q7 2.500 11 7L13 13Z" fill="#d8d8d8" />
              <circle cx="14.500" cy="11.500" r="5.500" fill="#d3202c" />
              <path d="M12.500 9.500 16.500 13.500M16.500 9.500 12.500 13.500" stroke="#fff" strokeWidth="1.400" />
            </svg>
          </TraySlot>
          <Language>ENG<br />IN</Language>
          <TraySlot $w={38}>
            <Line w={20} h={15} sw={1.500}><path d="M.8 5.500Q10-3.500 19.200 5.500M3.700 8.500Q10 2 16.300 8.500M6.500 11.300Q10 7.800 13.500 11.300" /><circle cx="10" cy="13" r="1.300" fill="#f2f2f2" /></Line>
          </TraySlot>
          <TraySlot $w={22}>
            <Line w={20} h={17} sw={1.400}><path d="M.8 5.500H4L8.500 1.500V15.500L4 11.500H.8ZM11.500 6Q13 8.500 11.500 11M14 3.500Q17 8.500 14 13.500M16.500 1Q21.500 8.500 16.500 16" /></Line>
          </TraySlot>
          <TraySlot $w={38}>
            <Line w={20} h={13} sw={1.500}><rect x=".8" y=".8" width="16" height="11.400" rx="2.500" /><rect x="3" y="3" width="6.500" height="7" fill="#fff" stroke="none" /><path d="M19 5V8" sw={2} /></Line>
          </TraySlot>
          <Clock>00:50<br />05-04-2023</Clock>
          <Notice>1</Notice>
        </Tray>
      </TaskBar>
    </Desktop>
  );
}
